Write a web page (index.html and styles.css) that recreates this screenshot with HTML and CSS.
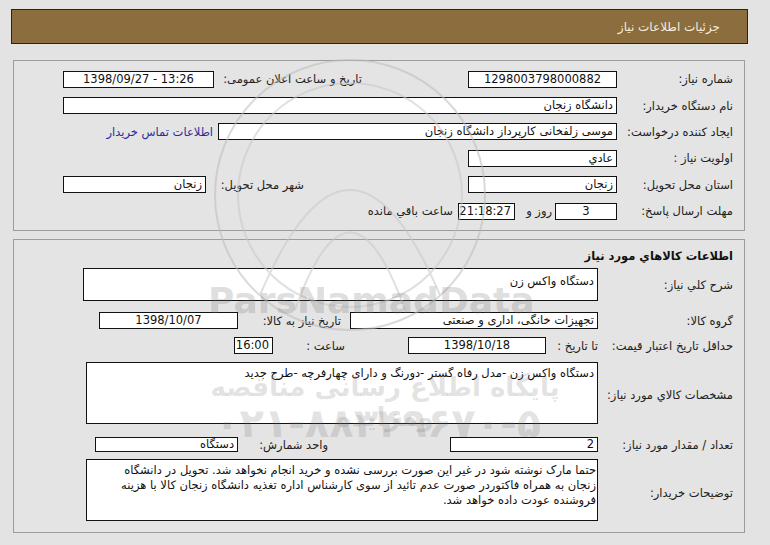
FILE: index.html
```html
<!DOCTYPE html>
<html lang="fa" dir="rtl">
<head>
<meta charset="utf-8">
<title>جزئیات اطلاعات نیاز</title>
<link rel="stylesheet" href="styles.css">
</head>
<body>
<div class="page">
  <div class="header"><span class="header-title">جزئیات اطلاعات نیاز</span></div>

  <div class="panel p1">
    <div class="row">
      <div class="lbl">شماره نیاز:</div>
      <div class="box c w149">1298003798000882</div>
      <div class="lbl2 r1l">تاریخ و ساعت اعلان عمومی:</div>
      <div class="box c w151 ltr">1398/09/27 - 13:26</div>
    </div>
    <div class="row">
      <div class="lbl">نام دستگاه خریدار:</div>
      <div class="box w554">دانشگاه زنجان</div>
    </div>
    <div class="row">
      <div class="lbl">ایجاد کننده درخواست:</div>
      <div class="box w399">موسی زلفخانی کارپرداز دانشگاه زنجان</div>
      <a class="link" href="#">اطلاعات تماس خریدار</a>
    </div>
    <div class="row">
      <div class="lbl">اولویت نیاز :</div>
      <div class="box w149">عادي</div>
    </div>
    <div class="row">
      <div class="lbl">استان محل تحویل:</div>
      <div class="box w149">زنجان</div>
      <div class="lbl2 r5l">شهر محل تحویل:</div>
      <div class="box w143">زنجان</div>
    </div>
    <div class="row">
      <div class="lbl">مهلت ارسال پاسخ:</div>
      <div class="box c w62">3</div>
      <div class="txt t-day">روز و</div>
      <div class="box c w57">21:18:27</div>
      <div class="txt t-rem">ساعت باقي مانده</div>
    </div>
  </div>

  <div class="panel p2">
    <div class="title">اطلاعات کالاهاي مورد نياز</div>
    <div class="row2 r-desc">
      <div class="lbl l2">شرح کلي نياز:</div>
      <div class="box tall w515 top">دستگاه واکس زن</div>
    </div>
    <div class="row2 r-group">
      <div class="lbl l2">گروه کالا:</div>
      <div class="box w248">تجهیزات خانگی، اداری و صنعتی</div>
      <div class="lbl2 g2l">تاریخ نیاز به کالا:</div>
      <div class="box c w139">1398/10/07</div>
    </div>
    <div class="row2 r-price">
      <div class="lbl l2">حداقل تاریخ اعتبار قیمت:</div>
      <div class="txt t-to">تا تاریخ :</div>
      <div class="box c w138">1398/10/18</div>
      <div class="txt t-hour">ساعت :</div>
      <div class="box c w39">16:00</div>
    </div>
    <div class="row2 r-spec">
      <div class="lbl l2">مشخصات کالاي مورد نياز:</div>
      <div class="box big w512 top">دستگاه واکس زن -مدل رفاه گستر -دورنگ و دارای چهارفرچه -طرح جدید</div>
    </div>
    <div class="row2 r-qty">
      <div class="lbl l2">تعداد / مقدار مورد نیاز:</div>
      <div class="box w148 sm">2</div>
      <div class="lbl2 q2l">واحد شمارش:</div>
      <div class="box w143 sm">دستگاه</div>
    </div>
    <div class="row2 r-note">
      <div class="lbl l2">توضیحات خریدار:</div>
      <div class="box big w512 top multi">حتما مارک نوشته شود در غیر این صورت بررسی نشده و خرید انجام نخواهد شد. تحویل در دانشگاه<br>زنجان به همراه فاکتوردر صورت عدم تائید از سوی کارشناس اداره تغذیه دانشگاه زنجان کالا با هزینه<br>فروشنده عودت داده خواهد شد.</div>
    </div>
  </div>

  <div class="watermark" aria-hidden="true">
    <svg class="wm-logo" width="300" height="300" viewBox="0 0 300 300">
      <circle cx="150" cy="150" r="135" fill="none" stroke="#bdbdbd" stroke-width="2"/>
      <circle cx="150" cy="150" r="112" fill="none" stroke="#c8c8c8" stroke-width="2"/>
      <path d="M60 250 Q150 40 240 250" fill="none" stroke="#c8c8c8" stroke-width="2"/>
      <path d="M95 265 Q150 110 205 265" fill="none" stroke="#c8c8c8" stroke-width="2"/>
    </svg>
    <div class="wm-brand">ParsNamadData</div>
    <div class="wm-fa">پایگاه اطلاع رسانی مناقصه ومزایده</div>
    <div class="wm-tel">۰۲۱-۸۸۳۴۹۶۷۰-۵</div>
  </div>
</div>
</body>
</html>
```
FILE: styles.css
```css
html, body {
  margin: 0;
  padding: 0;
  background: #e3e3e3;
}
body {
  font-family: "DejaVu Sans", sans-serif;
  font-size: 11px;
  color: #1a1a1a;
  direction: rtl;
}
.page {
  position: relative;
  width: 770px;
  height: 545px;
  overflow: hidden;
  padding-top: 9px;
  box-sizing: border-box;
}
.header {
  margin-right: 22px;
  width: 737px;
  height: 35px;
  box-sizing: border-box;
  background: #8c6d3e;
  border: 1px solid #2e2210;
  display: flex;
  align-items: center;
  padding-right: 27px;
}
.header-title {
  color: #f3ecdc;
  font-size: 12px;
  margin-top: 1px;
}
.panel {
  margin-right: 25px;
  width: 732px;
  box-sizing: border-box;
  border: 1px solid #9c9c9c;
  background: #e4e4e4;
  padding-right: 11px;
}
.p1 {
  margin-top: 16px;
  height: 171px;
  padding-top: 5px;
}
.p2 {
  margin-top: 8px;
  height: 294px;
  padding-top: 5px;
}
.row {
  display: flex;
  align-items: center;
  height: 26.4px;
}
.row2 {
  display: flex;
  align-items: center;
}
.lbl {
  width: 116px;
  flex: none;
  white-space: nowrap;
  font-size: 11.5px;
  color: #222;
}
.lbl.l2 {
  width: 135px;
}
.lbl2, .txt {
  flex: none;
  white-space: nowrap;
  font-size: 11.5px;
  color: #222;
}
.box {
  flex: none;
  box-sizing: border-box;
  height: 17px;
  background: #fff;
  border: 1px solid #111;
  padding: 0 3px;
  font-size: 11.5px;
  line-height: 15px;
  white-space: nowrap;
  overflow: hidden;
  color: #111;
}
.box.c { text-align: center; }
.box.ltr { direction: ltr; }
.box.sm { height: 15px; line-height: 13px; }
.box.top { align-self: flex-start; }
.box.tall { height: 33px; padding-top: 5px; }
.box.big { height: 62px; padding-top: 3px; }
.box.multi {
  white-space: nowrap;
  line-height: 15px;
  padding-top: 3px;
  padding-right: 1px;
}
.w149 { width: 149px; }
.w151 { width: 151px; }
.w554 { width: 554px; }
.w399 { width: 399px; }
.w143 { width: 143px; }
.w62 { width: 62px; }
.w57 { width: 57px; }
.w515 { width: 515px; }
.w248 { width: 248px; }
.w139 { width: 139px; }
.w138 { width: 138px; }
.w39 { width: 39px; }
.w512 { width: 512px; }
.w148 { width: 148px; }

.r1l { margin-right: 106px; width: 148px; }
.r5l { margin-right: 164px; width: 98px; }
.link {
  margin-right: 5px;
  color: #2b2b99;
  text-decoration: none;
  font-size: 11.5px;
  white-space: nowrap;
}
.t-day { margin-right: 3px; width: 37px; }
.t-rem { margin-right: 5px; }

.title {
  height: 22px;
  line-height: 22px;
  font-weight: bold;
  font-size: 11.5px;
  color: #111;
}
.r-desc { margin-top: 1px; height: 33px; }
.r-desc .lbl { margin-top: 1px; }
.r-group { margin-top: 11px; height: 17px; }
.g2l { margin-right: 9px; width: 103px; }
.r-price { margin-top: 8px; height: 17px; }
.t-to { width: 52px; }
.t-hour { margin-right: 63px; width: 57px; }
.r-price .box.w39 { margin-right: 15px; }
.r-spec { margin-top: 8px; height: 62px; }
.r-spec .lbl { margin-top: 4px; }
.r-qty { margin-top: 13px; height: 15px; }
.q2l { margin-right: 122px; width: 90px; }
.r-note { margin-top: 7px; height: 62px; }
.r-note .lbl { margin-top: 6px; }

.watermark {
  position: absolute;
  inset: 0;
  pointer-events: none;
  direction: ltr;
}
.wm-logo {
  position: absolute;
  left: 200px;
  top: 45px;
  opacity: 0.55;
}
.wm-brand {
  position: absolute;
  left: 208px;
  top: 280px;
  font-family: "DejaVu Sans", sans-serif;
  font-weight: bold;
  font-size: 36px;
  color: rgba(110, 110, 110, 0.24);
}
.wm-fa {
  position: absolute;
  left: 195px;
  top: 372px;
  width: 380px;
  text-align: center;
  font-family: "DejaVu Sans", sans-serif;
  font-weight: bold;
  font-size: 26px;
  color: rgba(110, 110, 110, 0.2);
  direction: rtl;
}
.wm-tel {
  position: absolute;
  left: 215px;
  top: 400px;
  width: 320px;
  text-align: center;
  font-family: "DejaVu Sans", sans-serif;
  font-weight: bold;
  font-size: 40px;
  color: rgba(110, 110, 110, 0.2);
}
```
